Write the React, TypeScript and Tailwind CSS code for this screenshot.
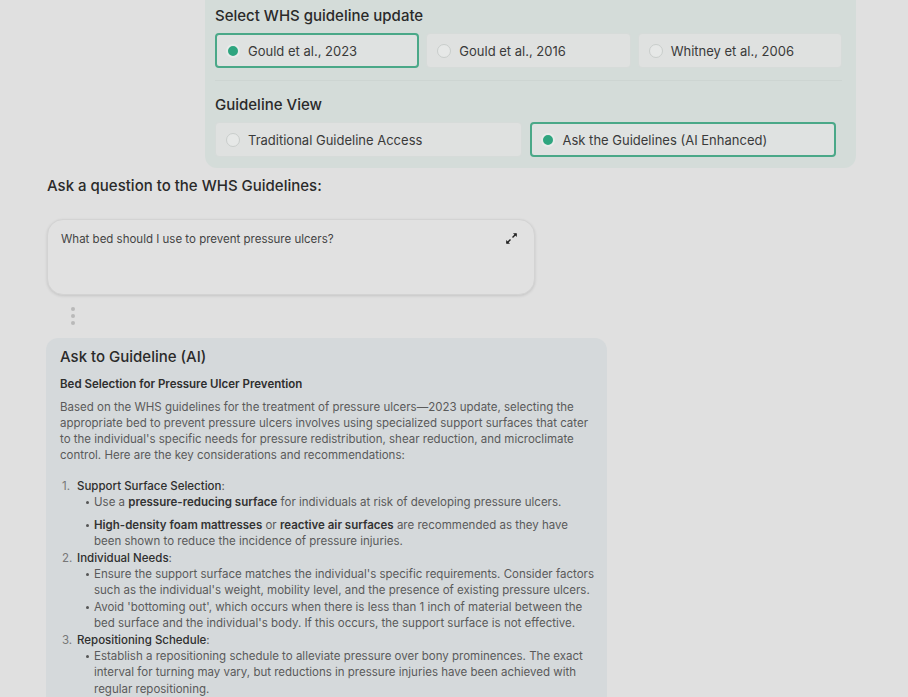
import React from 'react'

type Opt = { label: string; checked?: boolean }

function Radio({ checked }: { checked?: boolean }) {
  return checked ? (
    <span className="flex h-[14px] w-[14px] shrink-0 items-center justify-center rounded-full border-2 border-[#e8ebea] bg-[#2ea57f]" />
  ) : (
    <span className="h-[14px] w-[14px] shrink-0 rounded-full border border-[#c9cdcb] bg-[#e6e8e7]" />
  )
}

function Option({ label, checked }: Opt) {
  return (
    <div
      className={
        checked
          ? 'flex h-[35px] items-center gap-[8px] rounded-[4px] border-2 border-[#4aa888] bg-[#dfe2e1] pl-[9px]'
          : 'flex h-[35px] items-center gap-[8px] rounded-[4px] border border-[#d6dbd9] bg-[#dfe1e0] pl-[10px]'
      }
    >
      <Radio checked={checked} />
      <span className="text-[13px] leading-[18px] text-[#3a3a3a]">{label}</span>
    </div>
  )
}

function ExpandIcon() {
  return (
    <svg width="13" height="13" viewBox="0 0 13 13" className="text-[#222]">
      <path d="M7.5 5.5 L11 2" stroke="currentColor" strokeWidth="1.4" />
      <path d="M8 1.2 H11.8 V5 Z" fill="currentColor" />
      <path d="M5.5 7.5 L2 11" stroke="currentColor" strokeWidth="1.4" />
      <path d="M1.2 8 V11.8 H5 Z" fill="currentColor" />
    </svg>
  )
}

function Bullet({ children, className = '' }: { children: React.ReactNode; className?: string }) {
  return (
    <li className={'flex pl-[9px] ' + className}>
      <span className="flex h-[16.4px] w-[8px] shrink-0 items-center">
        <span className="h-[3px] w-[3px] rounded-full bg-[#555]" />
      </span>
      <span>{children}</span>
    </li>
  )
}

export default function App() {
  const b = 'font-semibold text-[#333]'
  return (
    <div className="h-[697px] overflow-hidden bg-[#e0e0e0] font-['Inter',sans-serif] text-[#2a2a2a]">
      {/* settings panel */}
      <div className="ml-[205px] w-[651px] rounded-b-xl bg-[#d4dcd9] px-[10px] pb-[11px] pt-[6px]">
        <h3 className="text-[15px] font-medium leading-[20px]">Select WHS guideline update</h3>
        <div className="mt-[7px] grid w-[627px] grid-cols-3 gap-[7px]">
          <Option label="Gould et al., 2023" checked />
          <Option label="Gould et al., 2016" />
          <Option label="Whitney et al., 2006" />
        </div>
        <div className="mt-[12px] h-px w-[627px] bg-[#cdd5d2]" />
        <h3 className="mt-[14px] text-[15px] font-medium leading-[20px]">Guideline View</h3>
        <div className="mt-[7px] grid w-[621px] grid-cols-2 gap-[8px]">
          <Option label="Traditional Guideline Access" />
          <Option label="Ask the Guidelines (AI Enhanced)" checked />
        </div>
      </div>

      <div className="pl-[47px]">
        <h3 className="mt-[8px] text-[15px] font-medium leading-[20px]">Ask a question to the WHS Guidelines:</h3>

        {/* question box */}
        <div className="mt-[23px] flex h-[76px] w-[488px] items-start justify-between rounded-2xl border border-[#d3d3d3] bg-[#e1e1e1] pl-[13px] pr-[16px] pt-[11px] shadow-[0_1px_3px_rgba(0,0,0,0.12)]">
          <p className="text-[11.5px] leading-[16px] text-[#444]">What bed should I use to prevent pressure ulcers?</p>
          <div className="pt-[1px]">
            <ExpandIcon />
          </div>
        </div>

        <div className="ml-[24px] mt-[12px] flex flex-col gap-[3px]">
          <span className="h-[4px] w-[4px] rounded-full bg-[#b9b9b9]" />
          <span className="h-[4px] w-[4px] rounded-full bg-[#b9b9b9]" />
          <span className="h-[4px] w-[4px] rounded-full bg-[#b9b9b9]" />
        </div>
      </div>

      {/* answer */}
      <div className="ml-[46px] mt-[13px] w-[561px] rounded-xl bg-[#d5d9db] pl-[14px] pr-[12px] pt-[9px] pb-[20px]">
        <h3 className="text-[15px] font-medium leading-[20px] text-[#2a2a2a]">Ask to Guideline (AI)</h3>
        <h4 className="mt-[9px] text-[11.5px] font-semibold leading-[16px] text-[#2e2e2e]">
          Bed Selection for Pressure Ulcer Prevention
        </h4>
        <p className="mt-[7px] text-[11.5px] leading-[16px] text-[#5a5a5a]">
          Based on the WHS guidelines for the treatment of pressure ulcers—2023 update, selecting the appropriate bed
          to prevent pressure ulcers involves using specialized support surfaces that cater to the individual's
          specific needs for pressure redistribution, shear reduction, and microclimate control. Here are the key
          considerations and recommendations:
        </p>
        <ol className="mt-[15px] text-[11.5px] leading-[16.4px] text-[#5a5a5a]">
          <li className="flex">
            <span className="w-[17px] shrink-0 pl-[2px] text-[#777]">1.</span>
            <div>
              <span className="font-medium text-[#2e2e2e]">Support Surface Selection</span>:
              <ul>
                <Bullet>
                  Use a <b className={b}>pressure-reducing surface</b> for individuals at risk of developing pressure
                  ulcers.
                </Bullet>
                <Bullet className="mt-[6px]">
                  <b className={b}>High-density foam mattresses</b> or <b className={b}>reactive air surfaces</b> are
                  recommended as they have been shown to reduce the incidence of pressure injuries.
                </Bullet>
              </ul>
            </div>
          </li>
          <li className="flex">
            <span className="w-[17px] shrink-0 pl-[2px] text-[#777]">2.</span>
            <div>
              <span className="font-medium text-[#2e2e2e]">Individual Needs</span>:
              <ul>
                <Bullet>
                  Ensure the support surface matches the individual's specific requirements. Consider factors such as
                  the individual's weight, mobility level, and the presence of existing pressure ulcers.
                </Bullet>
                <Bullet>
                  Avoid 'bottoming out', which occurs when there is less than 1 inch of material between the bed
                  surface and the individual's body. If this occurs, the support surface is not effective.
                </Bullet>
              </ul>
            </div>
          </li>
          <li className="flex">
            <span className="w-[17px] shrink-0 pl-[2px] text-[#777]">3.</span>
            <div>
              <span className="font-medium text-[#2e2e2e]">Repositioning Schedule</span>:
              <ul>
                <Bullet>
                  Establish a repositioning schedule to alleviate pressure over bony prominences. The exact interval for
                  turning may vary, but reductions in pressure injuries have been achieved with regular repositioning.
                </Bullet>
              </ul>
            </div>
          </li>
        </ol>
      </div>
    </div>
  )
}
